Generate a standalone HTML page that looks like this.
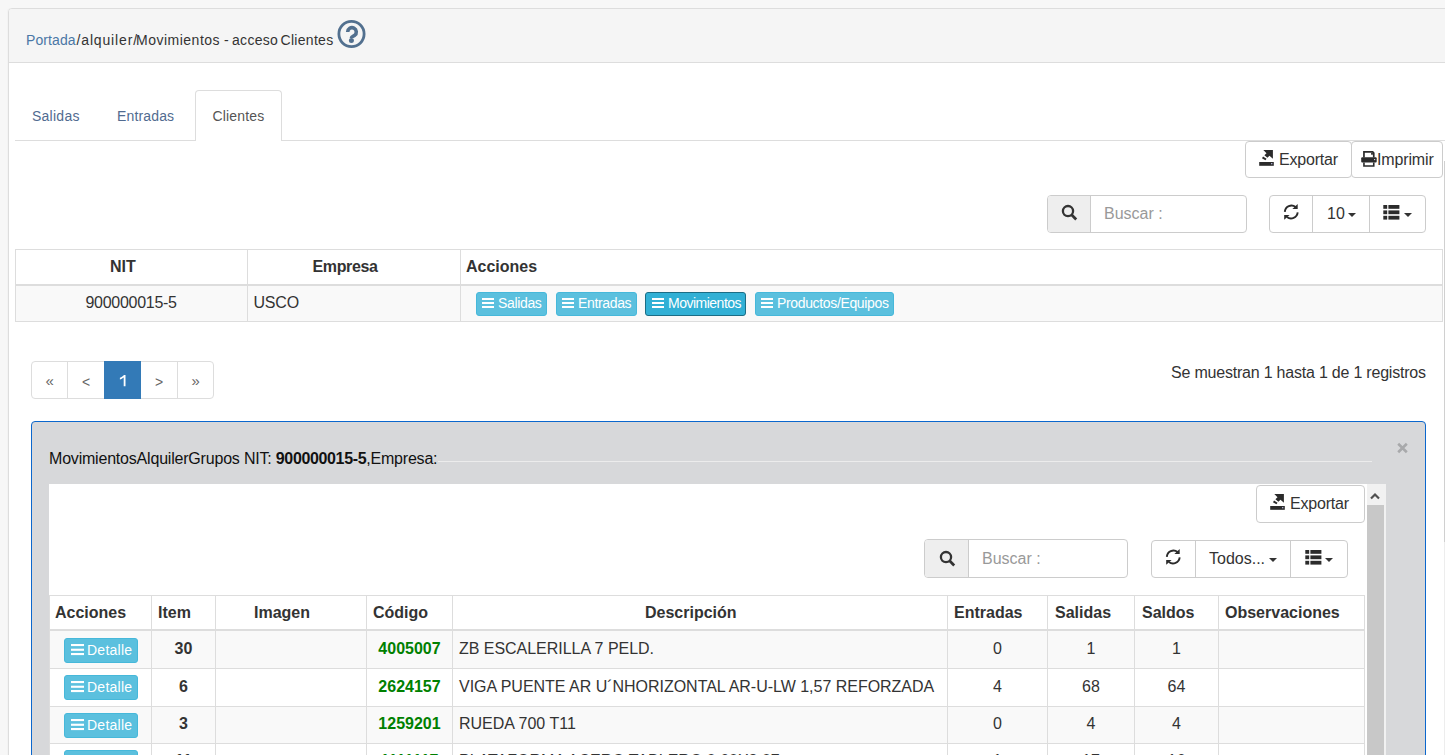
<!DOCTYPE html>
<html><head><meta charset="utf-8">
<style>
*{box-sizing:border-box;margin:0;padding:0}
html,body{width:1445px;height:755px;overflow:hidden;background:#f7f7f7;font-family:"Liberation Sans",sans-serif;color:#333}
.a{position:absolute}
.t{position:absolute;white-space:nowrap;line-height:20px;font-size:16px}
.b{font-weight:bold}
.s14{font-size:14px}
.s13{font-size:14px}
.btn{position:absolute;border:1px solid #ccc;background:#fff;border-radius:4px}
.vl{position:absolute;width:1px;background:#ccc}
.dl{position:absolute;width:1px;background:#ddd}
.hl{position:absolute;height:1px;background:#ddd}
.info{position:absolute;background:#5bc0de;border:1px solid #46b8da;border-radius:3px;height:24px}
.g{color:#008000;font-weight:bold}
.c{text-align:center}
svg{position:absolute;overflow:visible}
</style></head><body>
<div class="a" style="left:8px;top:8px;width:1450px;height:760px;border:1px solid #ddd;border-radius:4px;background:#fff;overflow:hidden;box-shadow:-1px 0 0 #f3f3f3">
  <div class="a" style="left:0;top:0;width:100%;height:54px;background:#f5f5f5;border-bottom:1px solid #ddd"></div>
</div>
<div class="t s14" style="left:26px;top:30px;color:#4a77a6;letter-spacing:0.1px">Portada</div>
<div class="t s14" style="left:76.5px;top:30px;letter-spacing:0.85px">/alquiler/</div>
<div class="t s14" style="left:136px;top:30px;letter-spacing:0.5px">Movimientos</div>
<div class="t s14" style="left:224px;top:30px">-</div>
<div class="t s14" style="left:232px;top:30px;letter-spacing:0.3px">acceso</div>
<div class="t s14" style="left:280.5px;top:30px;letter-spacing:0.3px">Clientes</div>
<svg style="left:337px;top:20px" width="29" height="29" viewBox="0 0 29 29">
  <circle cx="14.5" cy="14" r="12.6" fill="none" stroke="#52708f" stroke-width="2.8"/>
  <path d="M10.7 12A4.3 4.3 0 1 1 17.6 15.4C15.2 16.6 14.4 16.8 14.4 18" fill="none" stroke="#52708f" stroke-width="3.6"/>
  <circle cx="14.4" cy="20.4" r="2.5" fill="#52708f"/>
</svg>

<div class="hl" style="left:15px;top:140px;width:1430px"></div>
<div class="a" style="left:195px;top:90px;width:87px;height:51px;border:1px solid #ddd;border-bottom:none;border-radius:4px 4px 0 0;background:#fff"></div>
<div class="t s14" style="left:32px;top:106px;color:#516b90;letter-spacing:0.25px">Salidas</div>
<div class="t s14" style="left:117px;top:106px;color:#516b90;letter-spacing:0.15px">Entradas</div>
<div class="t s14" style="left:212.5px;top:106px;color:#555;letter-spacing:0.15px">Clientes</div>

<div class="btn" style="left:1245px;top:141px;width:107px;height:37px"></div>
<div class="btn" style="left:1351px;top:141px;width:92px;height:37px"></div>
<svg style="left:1256px;top:146px" width="20" height="22" viewBox="0 0 20 22">
  <path d="M7.3 4.1H16.9V12.8L13.5 9.8L11.4 11.8L8.4 9.3L10.5 7.3Z" fill="#2b2b2b"/>
  <path d="M6.5 11.3L10 13.5" stroke="#2b2b2b" stroke-width="2"/>
  <rect x="3.2" y="16" width="14.6" height="3.8" fill="#2b2b2b"/>
  <rect x="15" y="17" width="1.4" height="1.3" fill="#aac"/>
</svg>
<div class="t" style="left:1279px;top:150px;letter-spacing:-0.2px">Exportar</div>
<svg style="left:1358px;top:148px" width="22" height="22" viewBox="0 0 22 22">
  <path d="M5.95 9.5V3.95H14.7L15.75 5V9.5" fill="none" stroke="#2b2b2b" stroke-width="1.7"/>
  <rect x="13.1" y="4.8" width="1.8" height="1.9" fill="#2b2b2b"/>
  <rect x="3.2" y="9.3" width="15.5" height="5.3" rx="1" fill="#2b2b2b"/>
  <rect x="16" y="11" width="1.2" height="1.1" fill="#ccd"/>
  <path d="M5.95 14.4V17.95H15.75V14.4" fill="none" stroke="#2b2b2b" stroke-width="1.6"/>
</svg>
<div class="t" style="left:1377px;top:150px;letter-spacing:-0.15px">Imprimir</div>

<div class="a" style="left:1047px;top:195px;width:200px;height:38px;border:1px solid #ccc;border-radius:4px;background:#fff"></div>
<div class="a" style="left:1048px;top:196px;width:42px;height:36px;background:#eee;border-radius:3px 0 0 3px"></div>
<div class="vl" style="left:1090px;top:196px;height:36px"></div>
<svg style="left:1060px;top:203px" width="20" height="20" viewBox="0 0 20 20">
  <circle cx="8" cy="8.1" r="5.1" fill="none" stroke="#333" stroke-width="2.3"/>
  <path d="M11.6 11.8L16.2 16.4" stroke="#333" stroke-width="2.8"/>
</svg>
<div class="t" style="left:1104px;top:204px;color:#999">Buscar :</div>
<div class="btn" style="left:1269px;top:195px;width:157px;height:38px"></div>
<div class="vl" style="left:1312px;top:196px;height:36px"></div>
<div class="vl" style="left:1369px;top:196px;height:36px"></div>
<svg style="left:1283px;top:204px" width="17" height="17" viewBox="0 0 17 17">
  <path d="M1.8 7.9A6.7 6.9 0 0 1 12.6 3" fill="none" stroke="#2b2b2b" stroke-width="1.9"/>
  <path d="M14.7 -0.1V4.9H9.4Z" fill="#2b2b2b"/>
  <path d="M14.7 8.4A6.7 6.9 0 0 1 3.9 13" fill="none" stroke="#2b2b2b" stroke-width="1.9"/>
  <path d="M1.2 15.8V10.9H6.6Z" fill="#2b2b2b"/>
</svg>
<div class="t" style="left:1327px;top:204px">10</div>
<svg style="left:1348px;top:212.5px" width="8" height="4" viewBox="0 0 8 4"><path d="M0 0H8L4 4Z" fill="#333"/></svg>
<svg style="left:1383px;top:205px" width="17" height="15" viewBox="0 0 17 15"><rect x="0.3" y="0" width="3.9" height="3.8" fill="#2b2b2b"/><rect x="5.4" y="0" width="11" height="3.8" fill="#2b2b2b"/><rect x="0.3" y="5.4" width="3.9" height="3.8" fill="#2b2b2b"/><rect x="5.4" y="5.4" width="11" height="3.8" fill="#2b2b2b"/><rect x="0.3" y="10.8" width="3.9" height="3.8" fill="#2b2b2b"/><rect x="5.4" y="10.8" width="11" height="3.8" fill="#2b2b2b"/></svg>
<svg style="left:1404px;top:212.5px" width="8" height="4" viewBox="0 0 8 4"><path d="M0 0H8L4 4Z" fill="#333"/></svg>
<div class="a" style="left:15px;top:249px;width:1428px;height:73px;border:1px solid #ddd"></div>
<div class="a" style="left:16px;top:286px;width:1426px;height:35px;background:#f9f9f9"></div>
<div class="a" style="left:16px;top:284px;width:1426px;height:2px;background:#ddd"></div>
<div class="dl" style="left:247px;top:250px;height:71px"></div>
<div class="dl" style="left:460px;top:250px;height:71px"></div>
<div class="t b" style="left:110px;top:257px">NIT</div>
<div class="t b" style="left:312.5px;top:257px;letter-spacing:-0.35px">Empresa</div>
<div class="t b" style="left:466px;top:257px">Acciones</div>
<div class="t" style="left:85.5px;top:293px;letter-spacing:-0.28px">900000015-5</div>
<div class="t" style="left:253.5px;top:293px;letter-spacing:-0.2px">USCO</div>
<div class="info" style="left:476px;top:292px;width:71px"></div>
<svg style="left:482px;top:298px" width="12" height="10" viewBox="0 0 12 10"><rect x="0" y="0" width="12" height="2" fill="#fff"/><rect x="0" y="4" width="12" height="2" fill="#fff"/><rect x="0" y="8" width="12" height="2" fill="#fff"/></svg>
<div class="t s13" style="left:498px;top:293px;color:#fff;letter-spacing:-0.35px">Salidas</div>
<div class="info" style="left:556px;top:292px;width:81px"></div>
<svg style="left:562px;top:298px" width="12" height="10" viewBox="0 0 12 10"><rect x="0" y="0" width="12" height="2" fill="#fff"/><rect x="0" y="4" width="12" height="2" fill="#fff"/><rect x="0" y="8" width="12" height="2" fill="#fff"/></svg>
<div class="t s13" style="left:578px;top:293px;color:#fff;letter-spacing:-0.35px">Entradas</div>
<div class="info" style="left:645px;top:292px;width:101px;background:#31b0d5;border-color:#1b6d85"></div>
<svg style="left:652px;top:298px" width="12" height="10" viewBox="0 0 12 10"><rect x="0" y="0" width="12" height="2" fill="#fff"/><rect x="0" y="4" width="12" height="2" fill="#fff"/><rect x="0" y="8" width="12" height="2" fill="#fff"/></svg>
<div class="t s13" style="left:668px;top:293px;color:#fff;letter-spacing:-0.5px">Movimientos</div>
<div class="info" style="left:755px;top:292px;width:139px"></div>
<svg style="left:761px;top:298px" width="12" height="10" viewBox="0 0 12 10"><rect x="0" y="0" width="12" height="2" fill="#fff"/><rect x="0" y="4" width="12" height="2" fill="#fff"/><rect x="0" y="8" width="12" height="2" fill="#fff"/></svg>
<div class="t s13" style="left:777px;top:293px;color:#fff;letter-spacing:-0.35px">Productos/Equipos</div>
<div class="a" style="left:31px;top:361px;width:183px;height:38px;border:1px solid #ddd;border-radius:4px;background:#fff"></div>
<div class="dl" style="left:67px;top:362px;height:36px"></div>
<div class="a" style="left:104px;top:361px;width:37px;height:38px;background:#337ab7"></div>
<div class="dl" style="left:177px;top:362px;height:36px"></div>
<div class="t" style="left:45.5px;top:371px;color:#666;font-size:15px">«</div>
<div class="t" style="left:82px;top:372px;color:#666;font-size:14px">&lt;</div>
<svg style="left:119px;top:374px" width="8" height="13" viewBox="0 0 8 13"><path d="M0.9 3.7C2.7 2.9 4.1 1.9 5 0.9H6.5V12.3H4.7V3.5C3.7 4.3 2.1 5.1 0.9 5.5Z" fill="#fff"/></svg>

<div class="t" style="left:155px;top:372px;color:#666;font-size:14px">&gt;</div>
<div class="t" style="left:191.5px;top:371px;color:#666;font-size:15px">»</div>
<div class="t" style="left:1171px;top:363px;letter-spacing:-0.21px">Se muestran 1 hasta 1 de 1 registros</div>
<div class="a" style="left:31px;top:421px;width:1395px;height:340px;border:1px solid #0b67cd;border-radius:4px;background:#d7d8da"></div>
<div class="t" style="left:49px;top:449px;color:#111;letter-spacing:-0.2px">MovimientosAlquilerGrupos NIT: <b style="letter-spacing:-0.35px">900000015-5</b>,Empresa:</div>
<div class="a" style="left:438px;top:461px;width:934px;height:1px;background:#ececec"></div>
<svg style="left:1397px;top:443px" width="11" height="10" viewBox="0 0 11 10"><path d="M1.2 0.8L9.8 9.2M9.8 0.8L1.2 9.2" stroke="#a8a9ab" stroke-width="2.6"/></svg>
<div class="a" style="left:49px;top:484px;width:1337px;height:280px;background:#fff"></div>
<div class="btn" style="left:1256px;top:485px;width:109px;height:38px"></div>
<svg style="left:1267px;top:490px" width="20" height="22" viewBox="0 0 20 22">
  <path d="M7.3 4.1H16.9V12.8L13.5 9.8L11.4 11.8L8.4 9.3L10.5 7.3Z" fill="#2b2b2b"/>
  <path d="M6.5 11.3L10 13.5" stroke="#2b2b2b" stroke-width="2"/>
  <rect x="3.2" y="16" width="14.6" height="3.8" fill="#2b2b2b"/>
  <rect x="15" y="17" width="1.4" height="1.3" fill="#aac"/>
</svg>
<div class="t" style="left:1290px;top:494px;letter-spacing:-0.2px">Exportar</div>
<div class="a" style="left:924px;top:539px;width:204px;height:39px;border:1px solid #ccc;border-radius:4px;background:#fff"></div>
<div class="a" style="left:925px;top:540px;width:43px;height:37px;background:#eee;border-radius:3px 0 0 3px"></div>
<div class="vl" style="left:968px;top:540px;height:37px"></div>
<svg style="left:937.5px;top:548.5px" width="20" height="20" viewBox="0 0 20 20">
  <circle cx="8" cy="8.1" r="5.1" fill="none" stroke="#333" stroke-width="2.3"/>
  <path d="M11.6 11.8L16.2 16.4" stroke="#333" stroke-width="2.8"/>
</svg>
<div class="t" style="left:982px;top:549px;color:#999">Buscar :</div>
<div class="btn" style="left:1151px;top:540px;width:197px;height:38px"></div>
<div class="vl" style="left:1195px;top:541px;height:36px"></div>
<div class="vl" style="left:1290px;top:541px;height:36px"></div>
<svg style="left:1165px;top:549px" width="17" height="17" viewBox="0 0 17 17">
  <path d="M1.8 7.9A6.7 6.9 0 0 1 12.6 3" fill="none" stroke="#2b2b2b" stroke-width="1.9"/>
  <path d="M14.7 -0.1V4.9H9.4Z" fill="#2b2b2b"/>
  <path d="M14.7 8.4A6.7 6.9 0 0 1 3.9 13" fill="none" stroke="#2b2b2b" stroke-width="1.9"/>
  <path d="M1.2 15.8V10.9H6.6Z" fill="#2b2b2b"/>
</svg>
<div class="t" style="left:1209px;top:549px">Todos...</div>
<svg style="left:1269px;top:558px" width="8" height="4" viewBox="0 0 8 4"><path d="M0 0H8L4 4Z" fill="#333"/></svg>
<svg style="left:1305px;top:550px" width="17" height="15" viewBox="0 0 17 15"><rect x="0.3" y="0" width="3.9" height="3.8" fill="#2b2b2b"/><rect x="5.4" y="0" width="11" height="3.8" fill="#2b2b2b"/><rect x="0.3" y="5.4" width="3.9" height="3.8" fill="#2b2b2b"/><rect x="5.4" y="5.4" width="11" height="3.8" fill="#2b2b2b"/><rect x="0.3" y="10.8" width="3.9" height="3.8" fill="#2b2b2b"/><rect x="5.4" y="10.8" width="11" height="3.8" fill="#2b2b2b"/></svg>
<svg style="left:1325px;top:558px" width="8" height="4" viewBox="0 0 8 4"><path d="M0 0H8L4 4Z" fill="#333"/></svg>
<div class="a" style="left:49px;top:595px;width:1316px;height:170px;border:1px solid #ddd;border-bottom:none"></div>
<div class="a" style="left:50px;top:631px;width:1314px;height:37px;background:#f9f9f9"></div>
<div class="a" style="left:50px;top:706px;width:1314px;height:37px;background:#f9f9f9"></div>
<div class="a" style="left:50px;top:629px;width:1314px;height:2px;background:#ddd"></div>
<div class="hl" style="left:50px;top:668px;width:1314px"></div>
<div class="hl" style="left:50px;top:706px;width:1314px"></div>
<div class="hl" style="left:50px;top:743px;width:1314px"></div>
<div class="dl" style="left:151px;top:596px;height:170px"></div>
<div class="dl" style="left:215px;top:596px;height:170px"></div>
<div class="dl" style="left:366px;top:596px;height:170px"></div>
<div class="dl" style="left:452px;top:596px;height:170px"></div>
<div class="dl" style="left:947px;top:596px;height:170px"></div>
<div class="dl" style="left:1047px;top:596px;height:170px"></div>
<div class="dl" style="left:1134px;top:596px;height:170px"></div>
<div class="dl" style="left:1218px;top:596px;height:170px"></div>
<div class="t b" style="left:55px;top:603px">Acciones</div>
<div class="t b" style="left:158px;top:603px">Item</div>
<div class="t b" style="left:254px;top:603px">Imagen</div>
<div class="t b" style="left:373px;top:603px">Código</div>
<div class="t b" style="left:645px;top:603px">Descripción</div>
<div class="t b" style="left:954px;top:603px">Entradas</div>
<div class="t b" style="left:1055px;top:603px">Salidas</div>
<div class="t b" style="left:1142px;top:603px">Saldos</div>
<div class="t b" style="left:1225px;top:603px">Observaciones</div>
<div class="info" style="left:64px;top:638px;width:74px;height:25px"></div>
<svg style="left:71px;top:644px" width="13" height="11.1" viewBox="0 0 13 11.1"><rect x="0" y="0" width="13" height="2.1" fill="#fff"/><rect x="0" y="4.7" width="13" height="2.1" fill="#fff"/><rect x="0" y="9" width="13" height="2.1" fill="#fff"/></svg>
<div class="t s13" style="left:87px;top:640px;color:#fff;letter-spacing:0.25px">Detalle</div>
<div class="t b c" style="left:151px;top:639px;width:65px">30</div>
<div class="t g c" style="left:366px;top:639px;width:87px">4005007</div>
<div class="t" style="left:459px;top:639px;letter-spacing:-0.03px">ZB ESCALERILLA 7 PELD.</div>
<div class="t c" style="left:947px;top:639px;width:101px">0</div>
<div class="t c" style="left:1047px;top:639px;width:88px">1</div>
<div class="t c" style="left:1134px;top:639px;width:85px">1</div>
<div class="info" style="left:64px;top:675px;width:74px;height:25px"></div>
<svg style="left:71px;top:681px" width="13" height="11.1" viewBox="0 0 13 11.1"><rect x="0" y="0" width="13" height="2.1" fill="#fff"/><rect x="0" y="4.7" width="13" height="2.1" fill="#fff"/><rect x="0" y="9" width="13" height="2.1" fill="#fff"/></svg>
<div class="t s13" style="left:87px;top:677px;color:#fff;letter-spacing:0.25px">Detalle</div>
<div class="t b c" style="left:151px;top:677px;width:65px">6</div>
<div class="t g c" style="left:366px;top:677px;width:87px">2624157</div>
<div class="t" style="left:459px;top:677px;letter-spacing:-0.02px">VIGA PUENTE AR U´NHORIZONTAL AR-U-LW 1,57 REFORZADA</div>
<div class="t c" style="left:947px;top:677px;width:101px">4</div>
<div class="t c" style="left:1047px;top:677px;width:88px">68</div>
<div class="t c" style="left:1134px;top:677px;width:85px">64</div>
<div class="info" style="left:64px;top:713px;width:74px;height:25px"></div>
<svg style="left:71px;top:719px" width="13" height="11.1" viewBox="0 0 13 11.1"><rect x="0" y="0" width="13" height="2.1" fill="#fff"/><rect x="0" y="4.7" width="13" height="2.1" fill="#fff"/><rect x="0" y="9" width="13" height="2.1" fill="#fff"/></svg>
<div class="t s13" style="left:87px;top:715px;color:#fff;letter-spacing:0.25px">Detalle</div>
<div class="t b c" style="left:151px;top:714px;width:65px">3</div>
<div class="t g c" style="left:366px;top:714px;width:87px">1259201</div>
<div class="t" style="left:459px;top:714px;letter-spacing:0px">RUEDA 700 T11</div>
<div class="t c" style="left:947px;top:714px;width:101px">0</div>
<div class="t c" style="left:1047px;top:714px;width:88px">4</div>
<div class="t c" style="left:1134px;top:714px;width:85px">4</div>
<div class="info" style="left:64px;top:750px;width:74px;height:25px"></div>
<svg style="left:71px;top:756px" width="13" height="11.1" viewBox="0 0 13 11.1"><rect x="0" y="0" width="13" height="2.1" fill="#fff"/><rect x="0" y="4.7" width="13" height="2.1" fill="#fff"/><rect x="0" y="9" width="13" height="2.1" fill="#fff"/></svg>
<div class="t s13" style="left:87px;top:752px;color:#fff;letter-spacing:0.25px">Detalle</div>
<div class="t b c" style="left:151px;top:751px;width:65px">11</div>
<div class="t g c" style="left:366px;top:751px;width:87px">1111117</div>
<div class="t" style="left:459px;top:751px;letter-spacing:0px">PLATAFORMA ACERO TABLERO 0,60X2,07</div>
<div class="t c" style="left:947px;top:751px;width:101px">1</div>
<div class="t c" style="left:1047px;top:751px;width:88px">17</div>
<div class="t c" style="left:1134px;top:751px;width:85px">16</div>
<div class="a" style="left:1367px;top:484px;width:19px;height:280px;background:#f1f1f1"></div>
<div class="a" style="left:1367px;top:505px;width:17px;height:260px;background:#c8c8c8"></div>
<svg style="left:1370px;top:490px" width="10" height="10" viewBox="0 0 10 10"><path d="M1 8.5L5 4.5L9 8.5" fill="none" stroke="#505050" stroke-width="2.2"/></svg>
<div class="a" style="left:1444px;top:161px;width:1px;height:381px;background:#d0d0d0"></div>
<div class="a" style="left:1444px;top:542px;width:1px;height:213px;background:#ededed"></div>
</body></html>
